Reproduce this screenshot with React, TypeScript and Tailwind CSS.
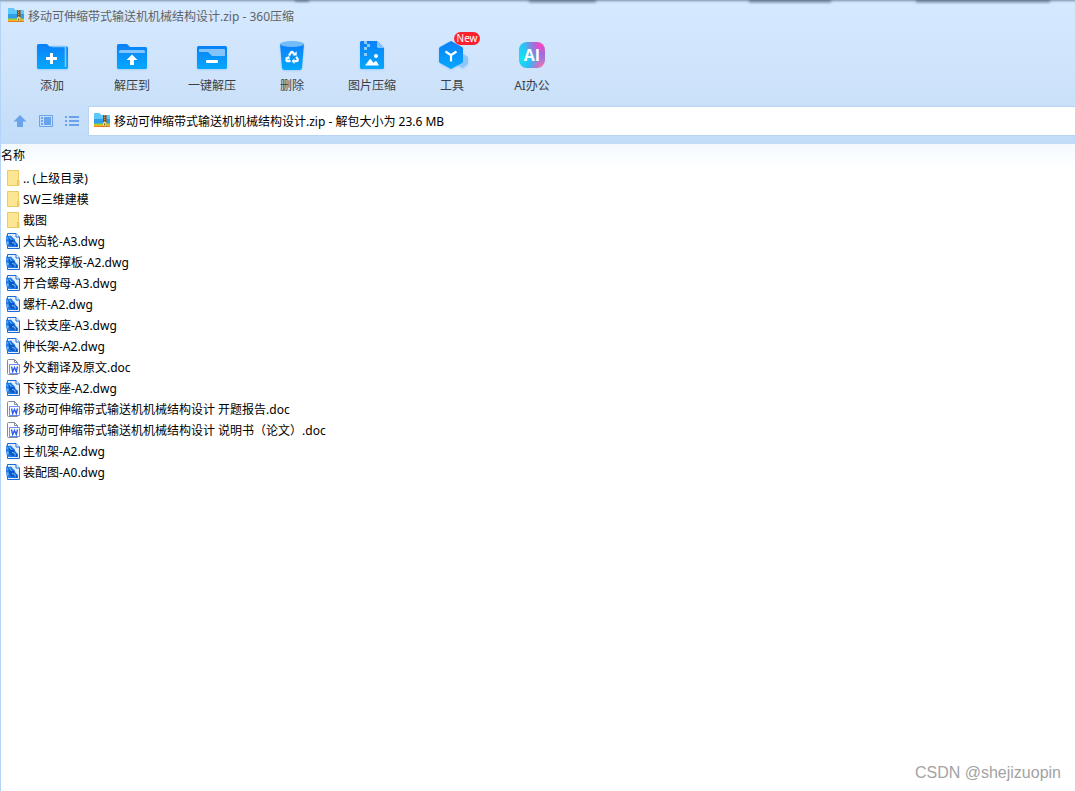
import type { ReactNode } from 'react';

type FileKind = 'folder' | 'dwg' | 'doc';

const ARCHIVE = '移动可伸缩带式输送机机械结构设计.zip';

const FILES: { name: string; kind: FileKind }[] = [
  { name: '.. (上级目录)', kind: 'folder' },
  { name: 'SW三维建模', kind: 'folder' },
  { name: '截图', kind: 'folder' },
  { name: '大齿轮-A3.dwg', kind: 'dwg' },
  { name: '滑轮支撑板-A2.dwg', kind: 'dwg' },
  { name: '开合螺母-A3.dwg', kind: 'dwg' },
  { name: '螺杆-A2.dwg', kind: 'dwg' },
  { name: '上铰支座-A3.dwg', kind: 'dwg' },
  { name: '伸长架-A2.dwg', kind: 'dwg' },
  { name: '外文翻译及原文.doc', kind: 'doc' },
  { name: '下铰支座-A2.dwg', kind: 'dwg' },
  { name: '移动可伸缩带式输送机机械结构设计 开题报告.doc', kind: 'doc' },
  { name: '移动可伸缩带式输送机机械结构设计 说明书（论文）.doc', kind: 'doc' },
  { name: '主机架-A2.dwg', kind: 'dwg' },
  { name: '装配图-A0.dwg', kind: 'dwg' },
];

function ZipIcon() {
  return (
    <svg viewBox="0 0 16 16" className="size-4 shrink-0" aria-hidden="true">
      <path d="M0 1.500Q0 0 1.500 0H5l2 2h9v9H0z" fill="#2f9fea" />
      <path d="M0 1.500Q0 0 1.500 0H5l2 2h9v4H0z" fill="#5cc8fb" />
      <path d="M0 10.500h16V12H0z" fill="#9bd23c" />
      <path d="M0 12h16v1.500H0z" fill="#f7b12c" />
      <path d="M0 13h16v1H0z" fill="#ef7d1f" />
      <path d="M9 2h3.500v12H9z" fill="#8d4a1c" />
      <path d="M10.700 2v7" stroke="#e0ac62" strokeDasharray="1 1" />
      <rect x="9" y="9" width="3.500" height="4.500" rx="1" fill="#ffdc66" />
      <path d="M10.700 10.500v2" stroke="#7a3d14" />
    </svg>
  );
}

function FileIcon({ kind }: { kind: FileKind }) {
  if (kind === 'folder') {
    return (
      <svg viewBox="0 0 16 16" className="mb-0.5 size-4 shrink-0" aria-hidden="true">
        <path d="M1.500.500h11v15h-11z" fill="#fde691" stroke="#eccb62" />
        <path d="M11.500 10.500h1.500v5h-1.500z" fill="#fbe08a" stroke="#e6c257" />
      </svg>
    );
  }
  if (kind === 'doc') {
    return (
      <svg viewBox="0 0 16 16" className="mb-0.5 size-4 shrink-0" aria-hidden="true">
        <path d="M2.500.500h6l3 3v12h-9a1 1 0 0 1-1-1v-13a1 1 0 0 1 1-1z" fill="#fff" stroke="#858b94" />
        <path d="M8.500.500v3h3" fill="none" stroke="#858b94" />
        <path d="M3.500 5.500h10v9h-10z" fill="#fff" stroke="#6c8cf6" />
        <path d="M5.500 7.500l1.200 5 1.800-4 1.800 4 1.200-5" fill="none" stroke="#2f5cf0" strokeWidth="1.400" />
      </svg>
    );
  }
  return (
    <svg viewBox="0 0 16 16" className="mb-0.5 size-4 shrink-0" aria-hidden="true">
      <path d="M1.500.500h8.500l3.500 3.500v11.500h-12z" fill="#e2f0ff" stroke="#1f6bd6" />
      <path d="M10 .500V4h3.500" fill="#fff" stroke="#1f6bd6" />
      <path d="M0 2.500L3 3l2-.500L7 5l1.500 1 1 2.500 2.500 2.500v3H3l-2-1-1-4z" fill="#1b78e4" />
      <path d="M0 3l2 2-1 2zM0 8l3 1-1 3-1-1z" fill="#6bb4fa" />
      <path d="M3 5l3 2 2 0 1 3 2 1.500V14l-3-1.500-2 .500-3-3z" fill="#0d57c2" />
      <path d="M3.500 4l2 3M6 9.500l2.500.500 1 2.500" fill="none" stroke="#79bdfd" />
    </svg>
  );
}

/* shared gradient for the toolbar drawings */
function ToolIcon({ id, children }: { id: string; children: ReactNode }) {
  return (
    <svg viewBox="0 0 40 36" className="h-9 w-10 drop-shadow-[0_1px_1px_#2f8fee40]" aria-hidden="true">
      <defs>
        <linearGradient id={id} x1="0" y1="0" x2="0" y2="1">
          <stop offset="0" stopColor="#0a80f8" />
          <stop offset="1" stopColor="#05a8fd" />
        </linearGradient>
      </defs>
      {children}
    </svg>
  );
}

function AddIcon() {
  return (
    <ToolIcon id="add">
      <path d="M5 7.500Q5 6 6.500 6H15l2.500 2.500h17Q36 8.500 36 10v19.500Q36 31 34.500 31h-28Q5 31 5 29.500z" fill="url(#add)" />
      <path d="M20 8.500h12q1.500 0 1.500 1.500v19" fill="none" stroke="#83c5fb" strokeWidth="1.600" />
      <path d="M19.500 15v11M14 20.500h11" stroke="#fff" strokeWidth="3" />
    </ToolIcon>
  );
}

function ExtractIcon() {
  return (
    <ToolIcon id="extract">
      <path d="M5 7.500Q5 6 6.500 6H15l3 3h15.500Q35 9 35 10.500v19Q35 31 33.500 31h-27Q5 31 5 29.500z" fill="url(#extract)" />
      <path d="M7 15v-1.500Q7 12 8.500 12h23q1.500 0 1.500 1.500V15z" fill="#83c5fb" />
      <path d="M20 16.500l5.500 5.500H22v5h-4v-5h-3.500z" fill="#fff" />
    </ToolIcon>
  );
}

function OneClickIcon() {
  return (
    <ToolIcon id="oneclick">
      <rect x="5" y="8" width="30" height="23" rx="1.500" fill="url(#oneclick)" />
      <path d="M7 11h25q1 0 1 1v6H20l-4-4H7z" fill="#83c5fb" />
      <rect x="14" y="22" width="12" height="3" rx="1" fill="#fff" />
    </ToolIcon>
  );
}

function DeleteIcon() {
  return (
    <ToolIcon id="delete">
      <path d="M8 6h24l-2 24q-.200 2-2.500 2h-15q-2.300 0-2.500-2z" fill="url(#delete)" />
      <ellipse cx="20" cy="6" rx="12" ry="3" fill="#73bcf8" />
      <g fill="none" stroke="#fff" strokeWidth="2.200">
        <path d="M17 17.700l2-3.200q1-1.200 2 0l1 1.700" />
        <path d="M24.200 18.700l1.500 2.600q.600 1.700-1.500 1.900h-2" />
        <path d="M18.500 23.200h-2.700q-2-.200-1.300-1.900l1-1.700" />
      </g>
      <path d="M20.500 17.500l4.300 0-.200-4.300zM22.500 20.500v5.400l-3-2.700zM13 19.700l4.200-1.700.700 3.700z" fill="#fff" />
    </ToolIcon>
  );
}

function ImageZipIcon() {
  return (
    <ToolIcon id="image">
      <path d="M9.500 3H25l7 7v19.500q0 1.500-1.500 1.500h-21Q8 31 8 29.500v-25Q8 3 9.500 3z" fill="url(#image)" />
      <path d="M25 3l7 7h-5.500Q25 10 25 8.500z" fill="#83c5fb" />
      <path d="M12 3h3v3h-3zM15 6h3v3h-3zM12 9h3v3h-3zM12 15h3v3h-3z" fill="#8fcbfb" />
      <circle cx="24" cy="18" r="2" fill="#fff" />
      <path d="M13 27.500l4.500-6q.700-.800 1.400 0l2.600 3.300 1.800-1.500q.700-.500 1.300.200l2.400 4z" fill="#fff" />
    </ToolIcon>
  );
}

function ToolsIcon() {
  return (
    <ToolIcon id="tools">
      <path d="M31 16l5 2.800v7L31 30l-6-3z" fill="#8cc6fa" />
      <path d="M18 3.400q1-.600 2 0l10 5.500q1 .600 1 1.800v12.600q0 1.200-1 1.800l-10 5.500q-1 .600-2 0l-10-5.500q-1-.600-1-1.800V10.700q0-1.200 1-1.800z" fill="url(#tools)" />
      <path d="M13.500 13.500L19 17.200l5.500-3.700M19 17v6.500" fill="none" stroke="#fff" strokeWidth="2.200" />
    </ToolIcon>
  );
}

function AiIcon() {
  return (
    <span className="flex h-9 w-10 items-start justify-center pt-1">
      <span className="flex size-[26px] items-center justify-center rounded-lg bg-[radial-gradient(circle_at_85%_10%,#ff3fc0_0%,#ff3fc000_55%),radial-gradient(circle_at_90%_95%,#ff6fa8_0%,#ff6fa800_40%),radial-gradient(circle_at_10%_65%,#12e6f0_0%,#12e6f000_65%),linear-gradient(135deg,#1fc8f5,#5b78ff)] font-['Open_Sans'] text-base font-bold text-white">
        AI
      </span>
    </span>
  );
}

const TOOLS = [
  { label: '添加', icon: <AddIcon /> },
  { label: '解压到', icon: <ExtractIcon /> },
  { label: '一键解压', icon: <OneClickIcon /> },
  { label: '删除', icon: <DeleteIcon /> },
  { label: '图片压缩', icon: <ImageZipIcon /> },
  { label: '工具', icon: <ToolsIcon />, badge: 'New' },
  { label: 'AI办公', icon: <AiIcon /> },
];

function TitleBar() {
  return (
    <header className="relative flex h-8 items-center gap-1 pl-2 text-[#5f6368]">
      {/* shadow cast by the windows behind */}
      <svg className="absolute inset-x-0 top-0 h-1.5 w-full" viewBox="0 0 1075 6" preserveAspectRatio="none" aria-hidden="true">
        <defs>
          <linearGradient id="edge" x1="0" y1="0" x2="0" y2="1">
            <stop offset="0" stopColor="#8097ad" />
            <stop offset=".300" stopColor="#a5bbd0" stopOpacity=".800" />
            <stop offset="1" stopColor="#d3e8fd" stopOpacity="0" />
          </linearGradient>
          <linearGradient id="dark" x1="0" y1="0" x2="0" y2="1">
            <stop offset="0" stopColor="#66798d" />
            <stop offset="1" stopColor="#8ea5bb" stopOpacity="0" />
          </linearGradient>
          <filter id="soften" x="-10%" width="120%">
            <feGaussianBlur stdDeviation="1.500 0" />
          </filter>
        </defs>
        <path d="M0 0h1075v4H0z" fill="url(#edge)" />
        <g fill="url(#dark)" filter="url(#soften)">
          <path d="M295 0h14v4h-14z" />
          <path d="M529 0h67v5h-67z" />
          <path d="M749 0h82v5h-82z" />
          <path d="M916 0h134v5H916z" />
        </g>
      </svg>
      <ZipIcon />
      <h1 className="pt-0.5">{ARCHIVE} - 360压缩</h1>
    </header>
  );
}

function Toolbar() {
  return (
    <nav className="flex pt-1.5 pl-3 text-[#3b3f45]">
      {TOOLS.map((tool) => (
        <button key={tool.label} type="button" className="relative flex w-20 flex-col items-center gap-1">
          {tool.icon}
          <span className="leading-4">{tool.label}</span>
          {tool.badge && (
            <span className="absolute -top-1.5 left-[42px] h-[13px] w-[26px] rounded-full bg-[#f9222e] text-center text-[10px] leading-[13px] text-white">
              {tool.badge}
            </span>
          )}
        </button>
      ))}
    </nav>
  );
}

function AddressBar() {
  return (
    <div className="flex h-11 items-center pb-0.5 pl-3">
      <div className="flex w-[76px] gap-2.5 text-[#6ba2ec]">
        <button type="button" aria-label="上级目录" className="size-4">
          <svg viewBox="0 0 16 16" fill="currentColor">
            <path d="M8 2l6.500 6.500H11V14H5V8.500H1.500z" />
          </svg>
        </button>
        <button type="button" aria-label="预览" className="size-4">
          <svg viewBox="0 0 16 16" fill="currentColor">
            <path d="M1.500 2.500h13v11h-13z" fill="none" stroke="currentColor" />
            <path d="M3 4h2v2H3zM3 7h2v2H3zM3 10h2v2H3zM6 4h7v8H6z" />
          </svg>
        </button>
        <button type="button" aria-label="列表" className="size-4">
          <svg viewBox="0 0 16 16" fill="currentColor">
            <path d="M1 3h2v2H1zM1 7h2v2H1zM1 11h2v2H1zM5 3h10v2H5zM5 7h10v2H5zM5 11h10v2H5z" />
          </svg>
        </button>
      </div>
      <label className="flex h-[30px] flex-1 items-center gap-1 border-y border-l border-[#b9d5f3] bg-white pl-[5px]">
        <ZipIcon />
        <input
          readOnly
          aria-label="路径"
          value={`${ARCHIVE} - 解包大小为 23.6 MB`}
          className="w-full min-w-0 pt-0.5 text-black outline-none"
        />
      </label>
    </div>
  );
}

export default function App() {
  return (
    <div className="relative flex min-h-screen flex-col border-l border-[#b3d3f7] bg-white font-['Noto_Sans','Noto_Sans_CJK_SC',sans-serif] text-xs text-black">
      <div className="-ml-px border-l border-[#b3d3f7] bg-linear-to-b from-[#d5eaff] via-[#cfe4fb] to-[#c2dcf8]">
        <div className="-ml-px">
          <TitleBar />
          <Toolbar />
          <div className="pt-1.5">
            <AddressBar />
          </div>
        </div>
      </div>

      <main className="flex-1 bg-[linear-gradient(#f3f9ff,#ffffff_24px)]">
        <table className="border-collapse text-left">
          <thead>
            <tr>
              <th className="h-6 py-0 font-normal">名称</th>
            </tr>
          </thead>
          <tbody>
            {FILES.map((file) => (
              <tr key={file.name}>
                <td className="h-[21px] p-0 pl-[5px]">
                  <span className="flex items-center gap-px leading-5 whitespace-nowrap">
                    <FileIcon kind={file.kind} />
                    {file.name}
                  </span>
                </td>
              </tr>
            ))}
          </tbody>
        </table>
      </main>

      <p className="absolute right-3.5 bottom-2 font-['Liberation_Sans',sans-serif] text-base leading-5 text-[#a3a3a3]">
        CSDN @shejizuopin
      </p>
    </div>
  );
}
